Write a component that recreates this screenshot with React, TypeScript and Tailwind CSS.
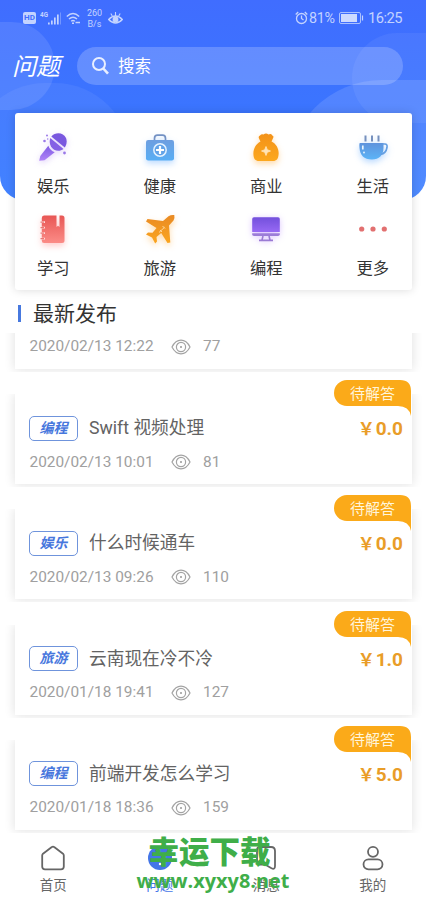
import type { ReactNode } from 'react';

type Question = {
  tag?: string;
  title?: string;
  date: string;
  views: number;
  price?: string;
};

const questions: Question[] = [
  { tag: '编程', title: 'Swift 视频处理', date: '2020/02/13 10:01', views: 81, price: '0.0' },
  { tag: '娱乐', title: '什么时候通车', date: '2020/02/13 09:26', views: 110, price: '0.0' },
  { tag: '旅游', title: '云南现在冷不冷', date: '2020/01/18 19:41', views: 127, price: '1.0' },
  { tag: '编程', title: '前端开发怎么学习', date: '2020/01/18 18:36', views: 159, price: '5.0' },
];

const MicIcon = () => (
  <svg width="30" height="30" viewBox="0 0 30 30" className="drop-shadow-[0_2px_3px_#a070f050]">
    <defs>
      <linearGradient id="mic" x1="0" y1="0" x2="0" y2="1">
        <stop offset="0" stopColor="#7f5ce4" />
        <stop offset="1" stopColor="#b083f7" />
      </linearGradient>
    </defs>
    <path d="M13.300 4.500C17.500 -.5 25.500 .3 28 6C29.300 9.500 28.600 12.800 26.800 15.400Z" fill="#7957df" />
    <path d="M12.300 6L25.500 17C21 20.300 15.500 18.700 13 14.500C11.400 11.500 11.400 8.500 12.300 6Z" fill="#8560e5" />
    <path d="M10.300 13.800C11.500 17 13.700 19.200 16.700 20.200L6.500 28.300L1.200 28.800L2.300 24Z" fill="url(#mic)" />
    <circle cx="9" cy="3.500" r="1" fill="#9a78e8" />
    <circle cx="6.500" cy="9" r="1.300" fill="#9a78e8" />
    <circle cx="9.700" cy="7" r=".7" fill="#9a78e8" />
    <circle cx="26.500" cy="21" r="1.400" fill="#9a78e8" />
  </svg>
);

const KitIcon = () => (
  <svg width="30" height="30" viewBox="0 0 30 30" className="drop-shadow-[0_3px_3px_#50a0ff60]">
    <defs>
      <linearGradient id="kit" x1="0" y1="0" x2="0" y2="1">
        <stop offset="0" stopColor="#6d9ee0" />
        <stop offset="1" stopColor="#58aef5" />
      </linearGradient>
    </defs>
    <path d="M9.500 8.500V6.500Q9.500 3.200 12.500 3.200H17.500Q20.500 3.200 20.500 6.500V8.500" fill="none" stroke="#7391c4" strokeWidth="1.700" />
    <rect x="1" y="8" width="28" height="20.500" rx="2.200" fill="url(#kit)" />
    <circle cx="15" cy="18" r="6.200" fill="#62a3e8" stroke="#e4f2ff" strokeWidth="1.500" />
    <path d="M15 14V22M11 18H19" stroke="#fff" strokeWidth="2.200" />
  </svg>
);

const MoneyBagIcon = () => (
  <svg width="30" height="30" viewBox="0 0 30 30" className="drop-shadow-[0_3px_3px_#ffa02060]">
    <defs>
      <linearGradient id="bag" x1="0" y1="0" x2="0" y2="1">
        <stop offset="0" stopColor="#f39117" />
        <stop offset="1" stopColor="#fca81e" />
      </linearGradient>
    </defs>
    <path
      d="M9 3.500Q10.500 1.500 12.500 2.500Q15 .5 17.500 2.500Q20 1.300 21.300 3.400Q23.200 4.200 22 6.200L20.500 9.500C25.500 12 28 17 27.600 22C27.300 27 25.500 29 22 29H8C4.500 29 2.500 27 2.400 22C2.200 17 4.800 12 9.500 9.500L8 6.500Q7 4.300 9 3.500Z"
      fill="url(#bag)"
    />
    <path d="M15 14.500L16.300 17.700L19.500 19L16.300 20.300L15 23.500L13.700 20.300L10.500 19L13.700 17.700Z" fill="#ffe3b5" stroke="#ffe3b5" strokeWidth=".8" />
  </svg>
);

const CupIcon = () => (
  <svg width="30" height="30" viewBox="0 0 30 30" className="drop-shadow-[0_3px_3px_#50a0ff60]">
    <defs>
      <linearGradient id="cup" x1="0" y1="0" x2="0" y2="1">
        <stop offset="0" stopColor="#5f93dc" />
        <stop offset="1" stopColor="#5cb4f7" />
      </linearGradient>
    </defs>
    <path d="M7.500 3.500V9.500M14 3.500V9.500M20.500 3.500V9.500" stroke="#7690bd" strokeWidth="2" />
    <path d="M2 11H25.500V16C25.500 23 21 27.500 14 27.500C6 27.500 2 23 1.500 16Q1 11 2 11Z" fill="url(#cup)" />
    <path d="M24.500 12H27Q29.500 12 29 15.500Q28 21.500 22.500 22.500" fill="none" stroke="#659fe2" strokeWidth="1.600" />
    <path d="M4.800 13.500V17.500" stroke="#eaf6ff" strokeWidth="1.700" />
    <circle cx="6" cy="20.500" r=".9" fill="#eaf6ff" />
  </svg>
);

const BookIcon = () => (
  <svg width="30" height="30" viewBox="0 0 30 30" className="drop-shadow-[0_3px_3px_#ff606050]">
    <defs>
      <linearGradient id="book" x1="0" y1="0" x2="0" y2="1">
        <stop offset="0" stopColor="#e85654" />
        <stop offset="1" stopColor="#fb8c87" />
      </linearGradient>
    </defs>
    <path
      d="M6 1.500H18.500V13L20 11.700L21.500 13V1.500H24Q26.500 1.500 26.500 4V26.500Q26.500 29 24 29H6Q3.800 29 3.800 26.500V25.500H7V23.800H3.800V20H7V18.300H3.800V14.500H7V12.800H3.800V9H7V7.300H3.800V4Q3.800 1.500 6 1.500Z"
      fill="url(#book)"
    />
    <path d="M2.500 8.100H6M2.500 13.600H6M2.500 19.100H6M2.500 24.600H6" stroke="#e87875" strokeWidth="1.300" />
  </svg>
);

const PlaneIcon = () => (
  <svg width="30" height="30" viewBox="0 0 30 30" className="drop-shadow-[0_3px_3px_#ffa02060]">
    <defs>
      <linearGradient id="plane" x1="0" y1="0" x2="0" y2="1">
        <stop offset="0" stopColor="#e98a24" />
        <stop offset="1" stopColor="#fba51e" />
      </linearGradient>
    </defs>
    <path
      d="M29.300 1Q30 4 28.500 6.500L24 11.500L25.300 28.500L22.500 29L16.200 19L11.500 23L12 27.500L10.200 29.500L7 23.500L1 20.500L3 18.500L7.500 18.800L11.500 14L1 7.500L2.500 5L18 7L23.500 2.300Q26 .5 29.300 1Z"
      fill="url(#plane)"
    />
    <path d="M14 18.500L19.500 13.300M17.500 12L20 14.500M15 16L17 18" stroke="#ffd79a" strokeWidth="1" />
  </svg>
);

const MonitorIcon = () => (
  <svg width="30" height="30" viewBox="0 0 30 30" className="drop-shadow-[0_1px_3px_#a060ff60]">
    <defs>
      <linearGradient id="monitor" x1="0" y1="0" x2="0" y2="1">
        <stop offset="0" stopColor="#7350dc" />
        <stop offset="1" stopColor="#9769f4" />
      </linearGradient>
    </defs>
    <path d="M3 3.300H27Q28.800 3.300 28.800 5V18H1.200V5Q1.200 3.300 3 3.300Z" fill="url(#monitor)" />
    <path d="M1.200 19.200H28.800V20.300Q28.800 22 27 22H3Q1.200 22 1.200 20.300Z" fill="#9c7cd8" />
    <path d="M12 22L11 26M18 22L19 26M8 26.400H22" stroke="#9a7ad4" strokeWidth="1.600" />
  </svg>
);

const MoreIcon = () => (
  <svg width="30" height="30" viewBox="0 0 30 30">
    <circle cx="3.700" cy="15" r="2.600" fill="#e27070" />
    <circle cx="15" cy="15" r="2.600" fill="#e27070" />
    <circle cx="26.300" cy="15" r="2.600" fill="#e27070" />
  </svg>
);

const categories: { name: string; icon: ReactNode }[] = [
  { name: '娱乐', icon: <MicIcon /> },
  { name: '健康', icon: <KitIcon /> },
  { name: '商业', icon: <MoneyBagIcon /> },
  { name: '生活', icon: <CupIcon /> },
  { name: '学习', icon: <BookIcon /> },
  { name: '旅游', icon: <PlaneIcon /> },
  { name: '编程', icon: <MonitorIcon /> },
  { name: '更多', icon: <MoreIcon /> },
];

const EyeIcon = () => (
  <svg width="20" height="16" viewBox="0 0 20 16" fill="none" stroke="#a3a3a3">
    <path d="M1 8Q4.500 1.200 10 1.200T19 8Q15.500 14.800 10 14.800T1 8Z" strokeWidth="1.200" />
    <circle cx="10" cy="8" r="4.600" strokeWidth="1.200" />
    <circle cx="10" cy="8" r="1" fill="#999" stroke="none" />
  </svg>
);

const StatusBar = () => (
  <div className="flex h-9 items-center justify-between pr-[23px] pl-[23px] text-[#c3d3ff]">
    <div className="flex items-center">
      <div className="flex h-[12px] w-[13px] items-center justify-center rounded-[2px] bg-[#c3d3ff] text-[8px] font-bold text-[#416fff]">
        HD
      </div>
      <svg width="21" height="16" viewBox="0 0 21 16" className="ml-1" fill="#c3d3ff">
        <text x="0" y="7" fontSize="7" fontWeight="700" textLength="8" lengthAdjust="spacingAndGlyphs">4G</text>
        <path d="M8 12.500h1.700v2H8zM11 10.500h1.700v4H11zM14 7.500h1.700v7H14zM17 4.500h1.700v10H17z" />
        <path d="M20 2.500h1v12h-1z" opacity=".4" />
      </svg>
      <svg width="15" height="13" viewBox="0 0 15 13" className="ml-[5px]" fill="none" stroke="#c3d3ff" strokeWidth="1.400">
        <path d="M.8 4.500Q7 -1.500 13.200 4.500M3 7Q7 3.300 11 7M5.200 9.200Q7 7.700 8.800 9.200" />
        <path d="M6 11.200H8M9.500 10.500H14" />
      </svg>
      <div className="ml-[5px] w-[17px] pt-[2px] text-center text-[9px] leading-[11px]">
        260
        <br />
        B/s
      </div>
      <svg width="15" height="13" viewBox="0 0 15 13" className="ml-[5px]" fill="none" stroke="#c3d3ff" strokeWidth="1.500">
        <path d="M.7 7.500Q7.500 .5 14.300 7.500Q7.500 14.500 .7 7.500Z" />
        <path d="M7.500 0V4M2.800 1.500L4.300 4M12.200 1.500L10.700 4" strokeWidth="1.100" />
        <circle cx="7.500" cy="7.500" r="2.200" fill="#c3d3ff" />
      </svg>
    </div>
    <div className="flex items-center text-[14.700px]">
      <svg width="13" height="14" viewBox="0 0 13 14" fill="none" stroke="#c3d3ff" strokeWidth="1.300">
        <circle cx="6.500" cy="7.500" r="5" />
        <path d="M6.500 4.500V7.500L8.500 9M.7 3.500L3.200 1M12.300 3.500L9.800 1" />
      </svg>
      <span className="ml-[1px] w-[28px] pt-px text-[14.300px] tracking-[-0.3px]">81%</span>
      <svg width="25" height="12" viewBox="0 0 25 12" className="ml-[2px]">
        <rect x=".5" y=".5" width="21" height="11" rx="1.500" fill="none" stroke="#a9c0ff" />
        <rect x="2" y="2" width="16" height="8" fill="#cddaff" />
        <path d="M23.500 3.500V8.500" stroke="#c3d3ff" strokeWidth="1.200" />
      </svg>
      <span className="ml-[4px] w-[35px] pt-px tracking-[-0.5px]">16:25</span>
    </div>
  </div>
);

const Badge = () => (
  <div className="absolute -top-[14px] right-[1px] h-[36px] w-[77px]">
    <svg width="77" height="36" viewBox="0 0 77 36" className="absolute">
      <path d="M13 0H66Q77 0 77 11V36Q75 26 64 26H13A13 13 0 0 1 13 0Z" fill="#fbaa19" />
    </svg>
    <span className="relative block pt-[1px] text-center text-[15px] leading-[26px] text-[#fff5dc]">待解答</span>
  </div>
);

const QuestionCard = ({ tag, title, date, views, price }: Question) => (
  <div className="relative mx-[15px] mb-[25.200px] h-[90px] w-[397px] shrink-0">
    <div className="absolute -inset-x-[12px] top-0 -bottom-[3px] overflow-hidden px-[12px] pb-[3px]">
      <div className="h-full bg-white shadow-[0_0_10px_1px_#0000001c]" />
    </div>
    {title && (
      <>
        <Badge />
        <div className="relative flex items-center pt-[21px] pr-[9px] pl-[14px]">
          <span className="flex h-[25px] w-[49px] items-center justify-center rounded-[5px] border border-[#6f94dc] text-[14px] font-bold text-[#4777dd] italic">
            {tag}
          </span>
          <span className="ml-[11px] text-[17.700px] leading-[26px] text-[#636363]">{title}</span>
          <span className="mt-[2px] ml-auto flex items-center text-[19px] leading-6 font-bold text-[#e99d28]">
            <span className="w-[18px] text-[17px]">￥</span>
            <span>{price}</span>
          </span>
        </div>
      </>
    )}
    <div className="absolute bottom-[11px] left-[14.500px] flex h-[22px] items-center text-[15.400px] text-[#a0a0a0]">
      <span className="w-[141.500px]">{date}</span>
      <EyeIcon />
      <span className="ml-[12px]">{views}</span>
    </div>
  </div>
);

const TabItem = ({ label, active, children }: { label: string; active?: boolean; children: ReactNode }) => (
  <div className={`flex flex-1 flex-col items-center ${active ? 'text-[#4476e8]' : 'text-[#666]'}`}>
    <div className="flex h-[26px] items-center">{children}</div>
    <span className="mt-[5px] text-[13.500px] leading-[18px]">{label}</span>
  </div>
);

const App = () => {
  return (
    <div className="relative flex h-[900px] w-[426px] flex-col overflow-hidden bg-white font-[Roboto,'Noto_Sans_CJK_SC',sans-serif]">
      <div className="absolute inset-x-0 top-0 h-[200px] overflow-hidden rounded-b-[24px] bg-linear-to-b from-[#406dff] to-[#367bff]">
        <div className="absolute top-[22px] -left-[42px] h-[88px] w-[97px] rounded-full bg-white/10" />
        <div className="absolute top-[83px] -left-[30px] h-[150px] w-[160px] rounded-full bg-white/6" />
        <div className="absolute top-[33px] left-[352px] h-[90px] w-[130px] rounded-full bg-white/6" />
        <div className="absolute top-[80px] left-[287px] h-[190px] w-[240px] rounded-full bg-white/12" />
      </div>

      <header className="relative h-[113px] shrink-0">
        <StatusBar />
        <div className="flex items-center pt-[11px] pl-[12px]">
          <h1 className="w-[65px] pt-[3px] text-[24px] leading-[35px] text-white italic">问题</h1>
          <div className="flex h-[38px] w-[326px] items-center rounded-full bg-white/20 pl-[15px] text-white">
            <svg width="17" height="18" viewBox="0 0 17 18" fill="none" stroke="#e9efff" strokeWidth="2">
              <circle cx="7" cy="7" r="6" />
              <path d="M11.300 11.500L16 16.700" strokeWidth="2.600" />
            </svg>
            <span className="ml-[9px] pt-[2px] text-[16.500px]">搜索</span>
          </div>
        </div>
      </header>

      <section className="relative mx-[15px] h-[177px] w-[397px] shrink-0 rounded-[3px] bg-white shadow-[0_0_10px_#00000026]">
        <div className="-ml-[15px] grid w-[426px] grid-cols-4 pt-[19px]">
          {categories.map((item) => (
            <div key={item.name} className="flex h-[82px] flex-col items-center">
              {item.icon}
              <span className="mt-[13px] text-[16.300px] leading-6 text-[#333]">{item.name}</span>
            </div>
          ))}
        </div>
      </section>

      <div className="relative flex h-[43px] shrink-0 items-center pt-[4px] pl-[18px]">
        <div className="h-[17px] w-[3px] bg-[#4779df]" />
        <h2 className="ml-[12px] text-[21px] leading-[30px] text-[#333]">最新发布</h2>
      </div>

      <main className="relative flex h-[501px] shrink-0 flex-col overflow-hidden">
        <div className="-mt-[54px] flex flex-col">
          <QuestionCard date="2020/02/13 12:22" views={77} />
          {questions.map((q) => (
            <QuestionCard key={q.date} {...q} />
          ))}
        </div>
      </main>

      <nav className="relative flex flex-1 bg-white pt-[11px]">
        <TabItem label="首页">
          <svg width="26" height="26" viewBox="0 0 26 26" fill="none" stroke="#666" strokeWidth="1.800" strokeLinejoin="round">
            <path d="M2.200 10.500Q2.200 9.500 3 8.700L11.500 2.200Q13 1.200 14.500 2.200L23 8.700Q23.800 9.500 23.800 10.500V21.500Q23.800 24.300 21 24.300H5Q2.200 24.300 2.200 21.500Z" />
          </svg>
        </TabItem>
        <TabItem label="问题" active>
          <svg width="26" height="26" viewBox="0 0 26 26">
            <circle cx="13" cy="13" r="12" fill="#4476e8" />
            <circle cx="13" cy="19" r="1.200" fill="#fff" />
          </svg>
        </TabItem>
        <TabItem label="消息">
          <svg width="22" height="26" viewBox="0 0 22 26" fill="none" stroke="#666" strokeWidth="1.800" strokeLinejoin="round">
            <path d="M5 2H16Q20 2 20 6V21Q20 25 16.500 23.300L10 19.500H5Q2 19.500 2 16.500V5Q2 2 5 2Z" />
          </svg>
        </TabItem>
        <TabItem label="我的">
          <svg width="22" height="26" viewBox="0 0 22 26" fill="none" stroke="#666" strokeWidth="1.800">
            <circle cx="11" cy="6.800" r="5" />
            <rect x="1.500" y="14.300" width="19" height="10" rx="5" />
          </svg>
        </TabItem>
      </nav>

      <div className="absolute top-[835px] left-[136.500px] w-[160px] font-bold text-[#3fae49]">
        <div className="ml-[12px] text-[30.500px] leading-[36px] font-black whitespace-nowrap">幸运下载</div>
        <div className="-mt-[2px] font-['Open_Sans',sans-serif] text-[19.900px] leading-[24px]">www.xyxy8.net</div>
      </div>
    </div>
  );
};

export default App;
